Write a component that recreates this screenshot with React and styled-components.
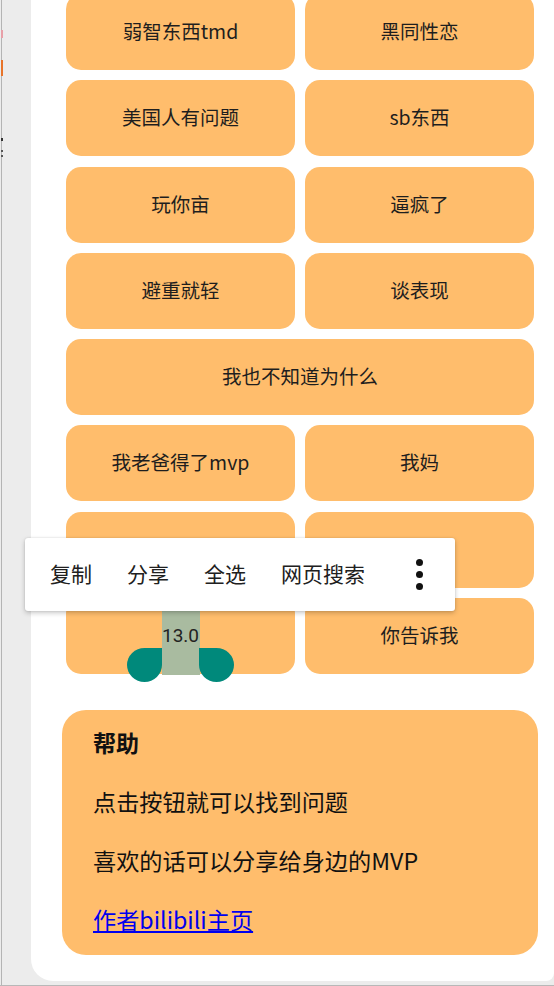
import React from 'react';
import styled, { createGlobalStyle } from 'styled-components';

const GlobalStyle = createGlobalStyle`
  html, body {
    margin: 0;
    padding: 0;
    background: #ececec;
  }
  body {
    font-family: 'Noto Sans CJK SC', 'Noto Sans', sans-serif;
  }
`;

const Frame = styled.div`
  position: relative;
  display: flex;
  width: 554px;
  height: 986px;
  overflow: hidden;
  background: #ececec;
  box-sizing: border-box;
  border-bottom: 1px solid #b8b8b8;
`;

const Gutter = styled.div`
  flex: none;
  width: 29px;
  margin-left: 1px;
  border-left: 1px solid #b4b4b4;
  display: flex;
  flex-direction: column;
`;

const Mark = styled.div`
  width: 2px;
  height: ${p => p.h}px;
  margin-top: ${p => p.top}px;
  margin-left: -1px;
  background: ${p => p.color};
`;

const Panel = styled.div`
  flex: 1;
  background: #ffffff;
  border-radius: 0 0 8px 22px;
  margin-bottom: 4px;
  overflow: hidden;
`;

const Grid = styled.div`
  display: grid;
  grid-template-columns: 229px 229px;
  grid-auto-rows: 76px;
  column-gap: 10px;
  row-gap: 10.3px;
  margin: -6px 20px 0 35px;
`;

const Btn = styled.div`
  position: relative;
  display: flex;
  align-items: center;
  justify-content: center;
  box-sizing: border-box;
  padding-bottom: 3px;
  grid-column: ${p => (p.wide ? '1 / span 2' : 'auto')};
  background: #ffbd6c;
  border-radius: 15px;
  font-size: 19.5px;
  color: #1e1e1e;
`;

const Picked = styled.span`
  position: relative;
  z-index: 1;
  margin-top: 2px;
  font-family: Roboto, 'Noto Sans', sans-serif;
  font-size: 19px;
  color: #222;
`;

const Highlight = styled.div`
  position: absolute;
  left: 96px;
  width: 38px;
  top: -20px;
  bottom: -1px;
  background: #a9bba0;
`;

const Handle = styled.div`
  position: absolute;
  z-index: 2;
  top: 50px;
  left: ${p => p.x}px;
  width: 35px;
  height: 34px;
  background: #00897b;
  border-radius: ${p => (p.side === 'left' ? '50% 0 50% 50%' : '0 50% 50% 50%')};
`;

const Help = styled.div`
  margin: 36px 16px 0 31px;
  height: 245px;
  box-sizing: border-box;
  padding: 15px 31px 0;
  background: #ffbd6c;
  border-radius: 24px;
  display: flex;
  flex-direction: column;
`;

const HelpTitle = styled.div`
  font-size: 23px;
  font-weight: 700;
  line-height: 34px;
  color: #111;
`;

const HelpLine = styled.div`
  margin-top: 25px;
  font-size: 23.2px;
  line-height: 34px;
  color: #111;
`;

const HelpLink = styled.a`
  margin-top: 25px;
  font-size: 23.2px;
  line-height: 34px;
  color: #0000ee;
  text-decoration: underline;
`;

const Menu = styled.div`
  position: absolute;
  z-index: 5;
  left: 25px;
  top: 538px;
  width: 430px;
  height: 73px;
  box-sizing: border-box;
  padding: 0 32px 0 25px;
  display: flex;
  align-items: center;
  gap: 35px;
  background: #ffffff;
  border-radius: 3px;
  box-shadow: 0 2px 5px rgba(0, 0, 0, 0.22), 0 0 2px rgba(0, 0, 0, 0.12);
`;

const MenuItem = styled.span`
  font-size: 21px;
  line-height: 28px;
  margin-bottom: 3px;
  color: #202020;
  white-space: nowrap;
`;

const Dots = styled.div`
  margin-left: auto;
  display: flex;
  flex-direction: column;
  gap: 5px;
  & > i {
    display: block;
    width: 7px;
    height: 7px;
    border-radius: 50%;
    background: #111;
  }
`;

const buttons = [
  { label: '弱智东西tmd' },
  { label: '黑同性恋' },
  { label: '美国人有问题' },
  { label: 'sb东西' },
  { label: '玩你亩' },
  { label: '逼疯了' },
  { label: '避重就轻' },
  { label: '谈表现' },
  { label: '我也不知道为什么', wide: true },
  { label: '我老爸得了mvp' },
  { label: '我妈' },
  { label: '' },
  { label: '' },
  { label: '13.0', selected: true },
  { label: '你告诉我' },
];

export default function App() {
  return (
    <>
      <GlobalStyle />
      <Frame>
        <Gutter>
          <Mark top={30} h={8} color="#e8a0a8" />
          <Mark top={22} h={16} color="#e8742a" />
          <Mark top={62} h={3} color="#333" />
          <Mark top={9} h={2} color="#555" />
          <Mark top={3} h={2} color="#555" />
        </Gutter>
        <Panel>
          <Grid>
            {buttons.map((b, i) => (
              <Btn key={i} wide={b.wide}>
                {b.selected ? (
                  <>
                    <Highlight />
                    <Picked>{b.label}</Picked>
                    <Handle side="left" x={61} />
                    <Handle side="right" x={133} />
                  </>
                ) : (
                  b.label
                )}
              </Btn>
            ))}
          </Grid>
          <Help>
            <HelpTitle>帮助</HelpTitle>
            <HelpLine>点击按钮就可以找到问题</HelpLine>
            <HelpLine>喜欢的话可以分享给身边的MVP</HelpLine>
            <HelpLink href="#">作者bilibili主页</HelpLink>
          </Help>
        </Panel>
        <Menu>
          <MenuItem>复制</MenuItem>
          <MenuItem>分享</MenuItem>
          <MenuItem>全选</MenuItem>
          <MenuItem>网页搜索</MenuItem>
          <Dots>
            <i />
            <i />
            <i />
          </Dots>
        </Menu>
      </Frame>
    </>
  );
}
